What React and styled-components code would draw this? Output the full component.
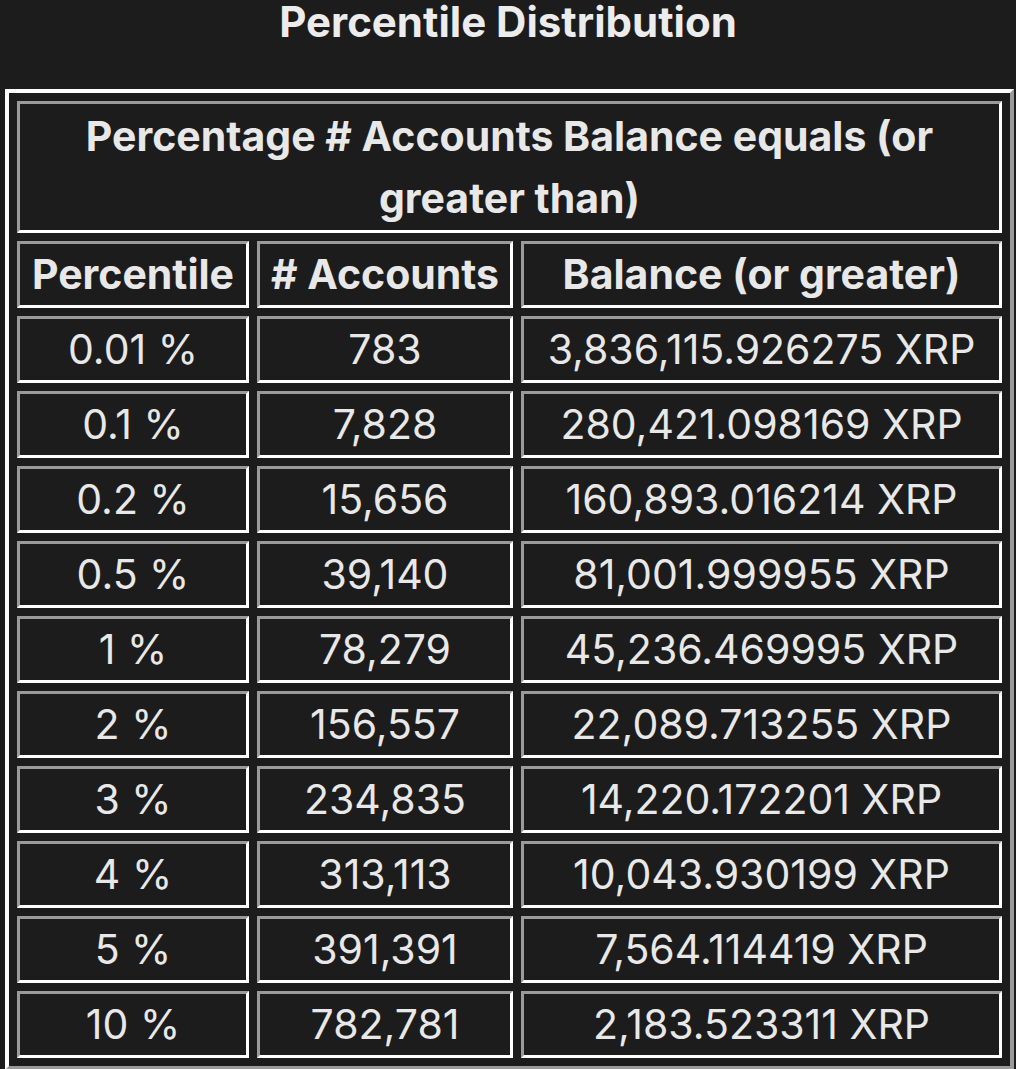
import React from "react";
import styled, { createGlobalStyle } from "styled-components";

const rows = [
  ["0.01 %", "783", "3,836,115.926275 XRP"],
  ["0.1 %", "7,828", "280,421.098169 XRP"],
  ["0.2 %", "15,656", "160,893.016214 XRP"],
  ["0.5 %", "39,140", "81,001.999955 XRP"],
  ["1 %", "78,279", "45,236.469995 XRP"],
  ["2 %", "156,557", "22,089.713255 XRP"],
  ["3 %", "234,835", "14,220.172201 XRP"],
  ["4 %", "313,113", "10,043.930199 XRP"],
  ["5 %", "391,391", "7,564.114419 XRP"],
  ["10 %", "782,781", "2,183.523311 XRP"],
];

const GlobalStyle = createGlobalStyle`
  body {
    margin: 0;
    background-color: #1c1c1c;
    color: #e8e8e8;
    font-family: Inter, "Noto Sans", sans-serif;
  }
`;

const Page = styled.div`
  width: 1016px;
  height: 1069px;
  overflow: hidden;
  background-color: #1c1c1c;
`;

const Title = styled.h1`
  margin: 0 0 45px 0;
  height: 44px;
  line-height: 44px;
  text-align: center;
  font-size: 42px;
  font-weight: 700;
  color: #ececec;
`;

const Table = styled.table`
  margin-left: 5px;
  width: 1009px;
  border-collapse: separate;
  border-spacing: 8px;
  border-style: solid;
  border-width: 4px;
  border-color: #ffffff #9a9a9a #9a9a9a #ffffff;
`;

const Cell = styled.td`
  width: ${(p) => p.$w || "auto"};
  padding: 0 2px;
  border-style: solid;
  border-width: 3px;
  border-color: #9a9a9a #ffffff #ffffff #9a9a9a;
  text-align: center;
  font-size: 41px;
  line-height: 61px;
  font-weight: ${(p) => (p.$bold ? 700 : 400)};
  color: #e8e8e8;
  white-space: nowrap;
`;

const HeadCell = styled(Cell)`
  white-space: normal;
  line-height: 62px;
  padding: 1px 40px;
`;

const App = () => {
  return (
    <Page>
      <GlobalStyle />
      <Title>Percentile Distribution</Title>
      <Table>
        <tbody>
          <tr>
            <HeadCell colSpan={3} $bold>
              Percentage # Accounts Balance equals (or greater than)
            </HeadCell>
          </tr>
          <tr>
            <Cell $bold $w="222px">Percentile</Cell>
            <Cell $bold $w="246px">
              # Accounts
            </Cell>
            <Cell $bold>Balance (or greater)</Cell>
          </tr>
          {rows.map((r) => (
            <tr key={r[0]}>
              <Cell>{r[0]}</Cell>
              <Cell>{r[1]}</Cell>
              <Cell>{r[2]}</Cell>
            </tr>
          ))}
        </tbody>
      </Table>
    </Page>
  );
};

export default App;
